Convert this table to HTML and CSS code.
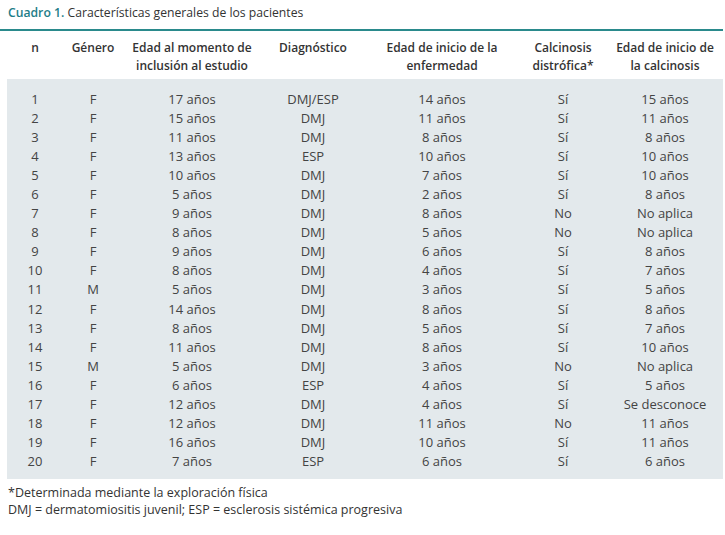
FILE: index.html
```html
<!DOCTYPE html>
<html lang="es">
<head>
<meta charset="utf-8">
<title>Cuadro 1</title>
<link rel="stylesheet" href="styles.css">
</head>
<body>
<div class="page">
  <h1 class="title"><span class="label">Cuadro 1.</span> Características generales de los pacientes</h1>
  <table class="data">
    <colgroup>
      <col class="c1"><col class="c2"><col class="c3"><col class="c4"><col class="c5"><col class="c6"><col class="c7">
    </colgroup>
    <thead>
      <tr>
        <th>n</th>
        <th>Género</th>
        <th>Edad al momento de inclusión al estudio</th>
        <th>Diagnóstico</th>
        <th>Edad de inicio de la enfermedad</th>
        <th>Calcinosis distrófica*</th>
        <th>Edad de inicio de<br>la calcinosis</th>
      </tr>
    </thead>
    <tbody>
      <tr><td>1</td><td>F</td><td>17 años</td><td>DMJ/ESP</td><td>14 años</td><td>Sí</td><td>15 años</td></tr>
      <tr><td>2</td><td>F</td><td>15 años</td><td>DMJ</td><td>11 años</td><td>Sí</td><td>11 años</td></tr>
      <tr><td>3</td><td>F</td><td>11 años</td><td>DMJ</td><td>8 años</td><td>Sí</td><td>8 años</td></tr>
      <tr><td>4</td><td>F</td><td>13 años</td><td>ESP</td><td>10 años</td><td>Sí</td><td>10 años</td></tr>
      <tr><td>5</td><td>F</td><td>10 años</td><td>DMJ</td><td>7 años</td><td>Sí</td><td>10 años</td></tr>
      <tr><td>6</td><td>F</td><td>5 años</td><td>DMJ</td><td>2 años</td><td>Sí</td><td>8 años</td></tr>
      <tr><td>7</td><td>F</td><td>9 años</td><td>DMJ</td><td>8 años</td><td>No</td><td>No aplica</td></tr>
      <tr><td>8</td><td>F</td><td>8 años</td><td>DMJ</td><td>5 años</td><td>No</td><td>No aplica</td></tr>
      <tr><td>9</td><td>F</td><td>9 años</td><td>DMJ</td><td>6 años</td><td>Sí</td><td>8 años</td></tr>
      <tr><td>10</td><td>F</td><td>8 años</td><td>DMJ</td><td>4 años</td><td>Sí</td><td>7 años</td></tr>
      <tr><td>11</td><td>M</td><td>5 años</td><td>DMJ</td><td>3 años</td><td>Sí</td><td>5 años</td></tr>
      <tr><td>12</td><td>F</td><td>14 años</td><td>DMJ</td><td>8 años</td><td>Sí</td><td>8 años</td></tr>
      <tr><td>13</td><td>F</td><td>8 años</td><td>DMJ</td><td>5 años</td><td>Sí</td><td>7 años</td></tr>
      <tr><td>14</td><td>F</td><td>11 años</td><td>DMJ</td><td>8 años</td><td>Sí</td><td>10 años</td></tr>
      <tr><td>15</td><td>M</td><td>5 años</td><td>DMJ</td><td>3 años</td><td>No</td><td>No aplica</td></tr>
      <tr><td>16</td><td>F</td><td>6 años</td><td>ESP</td><td>4 años</td><td>Sí</td><td>5 años</td></tr>
      <tr><td>17</td><td>F</td><td>12 años</td><td>DMJ</td><td>4 años</td><td>Sí</td><td>Se desconoce</td></tr>
      <tr><td>18</td><td>F</td><td>12 años</td><td>DMJ</td><td>11 años</td><td>No</td><td>11 años</td></tr>
      <tr><td>19</td><td>F</td><td>16 años</td><td>DMJ</td><td>10 años</td><td>Sí</td><td>11 años</td></tr>
      <tr><td>20</td><td>F</td><td>7 años</td><td>ESP</td><td>6 años</td><td>Sí</td><td>6 años</td></tr>
    </tbody>
  </table>
  <div class="notes">
    <p>*Determinada mediante la exploración física</p>
    <p>DMJ = dermatomiositis juvenil; ESP = esclerosis sistémica progresiva</p>
  </div>
</div>
</body>
</html>
```

FILE: styles.css
```css
html, body {
  margin: 0;
  padding: 0;
  background: #ffffff;
}

.page {
  width: 725px;
  font-family: "Open Sans", "Liberation Sans", sans-serif;
  color: #3a3a3a;
}

.title {
  margin: 0;
  width: 723px;
  box-sizing: border-box;
  padding: 4px 0 0 8px;
  height: 31px;
  font-size: 12.2px;
  font-weight: normal;
  line-height: 18px;
  color: #333333;
  border-bottom: 2px solid #2a8a8c;
}

.title .label {
  color: #1d7d88;
  font-weight: 600;
}

.data {
  margin-left: 7px;
  width: 716px;
  table-layout: fixed;
  border-collapse: collapse;
  font-size: 13px;
}

.c1 { width: 56px; }
.c2 { width: 60px; }
.c3 { width: 138px; }
.c4 { width: 104px; }
.c5 { width: 154px; }
.c6 { width: 88px; }
.c7 { width: 116px; }

.data th {
  padding: 8px 0 4px;
  font-size: 12px;
  font-weight: 600;
  line-height: 18px;
  text-align: center;
  vertical-align: top;
  color: #333333;
}

.data tbody {
  background: #e3e9ec;
}

.data td {
  padding: 0;
  line-height: 19.05px;
  text-align: center;
  color: #444444;
}

.data tbody tr:first-child td {
  padding-top: 11px;
}

.data tbody tr:last-child td {
  padding-bottom: 8px;
}

.notes {
  padding: 5px 0 0 8px;
  font-size: 12.5px;
  line-height: 17px;
  color: #333333;
}

.notes p {
  margin: 0;
}
```
